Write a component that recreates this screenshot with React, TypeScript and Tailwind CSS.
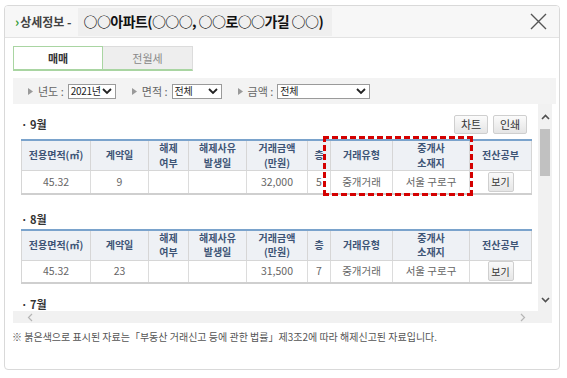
import React from "react";

const FONT = { fontFamily: '"Noto Sans CJK KR", "Noto Sans", sans-serif' };

const cols = [69, 58, 40, 58, 61, 23, 62, 77, 62];

function Tri() {
  return (
    <svg width="5" height="7" viewBox="0 0 5 7" className="mr-[5px]">
      <path d="M0 0 L5 3.5 L0 7 Z" fill="#9a9a9a" />
    </svg>
  );
}

function Chevron() {
  return (
    <svg width="10" height="7" viewBox="0 0 10 7" className="shrink-0">
      <path d="M1 1 L5 5 L9 1" fill="none" stroke="#222" strokeWidth="1.8" />
    </svg>
  );
}

function Select({ value, w }: { value: string; w: string }) {
  return (
    <div
      className={`${w} h-[15px] border border-[#9a9a9a] bg-white flex items-center justify-between pl-[2px] pr-[3px] text-[10px] tracking-[-0.3px] text-[#222] leading-none whitespace-nowrap`}
    >
      <span>{value}</span>
      <Chevron />
    </div>
  );
}

function Table({ day, floor, price }: { day: string; floor: string; price: string }) {
  const th = "border-r border-[#d6d6d6] last:border-r-0 text-[10px] font-bold text-[#3d5475] leading-[14.5px] text-center align-middle whitespace-nowrap";
  const td = "border-r border-[#dcdcdc] last:border-r-0 text-[10.5px] text-[#666] text-center align-middle whitespace-nowrap";
  return (
    <table className="table-fixed border-collapse w-[510px] border-t-2 border-t-[#7aa3cc] border-b-2 border-b-[#cfcfcf] border-l border-l-[#d6d6d6] border-r border-r-[#d6d6d6]">
      <colgroup>
        {cols.map((c, i) => (
          <col key={i} style={{ width: c }} />
        ))}
      </colgroup>
      <thead>
        <tr className="h-[29px] bg-[#eef1f5] border-b border-[#d6d6d6]">
          <th className={th}>전용면적(㎡)</th>
          <th className={th}>계약일</th>
          <th className={th}>해제<br />여부</th>
          <th className={th}>해제사유<br />발생일</th>
          <th className={th}>거래금액<br />(만원)</th>
          <th className={th}>층</th>
          <th className={th}>거래유형</th>
          <th className={th}>중개사<br />소재지</th>
          <th className={th}>전산공부</th>
        </tr>
      </thead>
      <tbody>
        <tr className="h-[23px] bg-white">
          <td className={td}>45.32</td>
          <td className={td}>{day}</td>
          <td className={td}></td>
          <td className={td}></td>
          <td className={td}>{price}</td>
          <td className={td}>{floor}</td>
          <td className={td}>중개거래</td>
          <td className={td}>서울 구로구</td>
          <td className={td}>
            <div className="mx-auto w-[26px] h-[20px] border border-[#cfcfcf] rounded-[2px] bg-gradient-to-b from-[#fafafa] to-[#e6e6e6] text-[10px] text-[#333] flex items-center justify-center">
              보기
            </div>
          </td>
        </tr>
      </tbody>
    </table>
  );
}

function Btn({ label }: { label: string }) {
  return (
    <div className="w-[34px] h-[19px] border border-[#cfcfcf] rounded-[2px] bg-gradient-to-b from-[#fbfbfb] to-[#e5e5e5] text-[11px] text-[#333] flex items-center justify-center">
      {label}
    </div>
  );
}

export default function App() {
  return (
    <div className="w-[567px] h-[378px] bg-white pt-[5px] pl-[4px]" style={FONT}>
      <div className="w-[556px] h-[365px] border border-[#d9d9d9] rounded-[4px] flex flex-col overflow-hidden">
        {/* header */}
        <div className="h-[32px] shrink-0 bg-[#f7f7f7] border-b border-[#e3e3e3] flex items-center pl-[10px] pr-[10px] whitespace-nowrap">
          <span className="text-[#2e9a2e] text-[13px] font-bold leading-none mr-[1px]">›</span>
          <span className="text-[12px] text-[#444] font-bold">상세정보 -</span>
          <div className="ml-[6px] h-[28px] w-[254px] bg-[#efefef] flex items-center pl-[6px] overflow-hidden">
            <span className="text-[14px] font-bold text-[#111] tracking-[-0.6px] whitespace-nowrap">○○아파트(○○○, ○○로○○가길 ○○)</span>
          </div>
          <div className="ml-auto mr-[2px]">
            <svg width="17" height="17" viewBox="0 0 17 17">
              <path d="M1 1 L16 16 M16 1 L1 16" stroke="#555" strokeWidth="1.4" />
            </svg>
          </div>
        </div>

        {/* body */}
        <div className="pl-[8px] pr-[3px] pt-[8px] flex flex-col">
          {/* tabs */}
          <div className="flex h-[25px]">
            <div className="w-[90px] h-full border border-[#a9d5a2] border-b-2 bg-white flex items-center justify-center text-[11px] font-bold text-[#333]">
              매매
            </div>
            <div className="w-[90px] h-full border border-[#dcdcdc] border-l-0 border-b-2 border-b-[#a9d5a2] bg-[#eeeeee] flex items-center justify-center text-[11px] text-[#888]">
              전월세
            </div>
          </div>

          {/* filter bar */}
          <div className="mt-[7px] h-[26px] bg-[#f3f3f3] flex items-center pl-[15px] text-[11px] text-[#666] whitespace-nowrap">
            <Tri />
            <span className="mr-[4px]">년도 :</span>
            <Select value="2021년" w="w-[48px]" />
            <div className="w-[16px]" />
            <Tri />
            <span className="mr-[4px]">면적 :</span>
            <Select value="전체" w="w-[50px]" />
            <div className="w-[16px]" />
            <Tri />
            <span className="mr-[4px]">금액 :</span>
            <Select value="전체" w="w-[93px]" />
          </div>

          {/* scroll region */}
          <div className="flex h-[219px] w-[539px]">
            <div className="flex flex-col w-[525px]">
              <div className="relative h-[207px] overflow-hidden pl-[8px]">
                {/* section 9 */}
                <div className="pt-[11px] w-[510px]">
                  <div className="h-[19px] flex items-center justify-between">
                    <span className="text-[11px] font-bold text-[#333]">· 9월</span>
                    <div className="flex gap-[5px] mr-[4px]">
                      <Btn label="차트" />
                      <Btn label="인쇄" />
                    </div>
                  </div>
                  <div className="mt-[5px]">
                    <Table day="9" floor="5" price="32,000" />
                  </div>
                </div>
                {/* section 8 */}
                <div className="mt-[16px]">
                  <div className="h-[18px] flex items-center text-[11px] font-bold text-[#333]">· 8월</div>
                  <Table day="23" floor="7" price="31,500" />
                </div>
                {/* section 7 */}
                <div className="mt-[12px]">
                  <div className="h-[16px] flex items-center text-[11px] leading-[15px] font-bold text-[#333]">· 7월</div>
                </div>
                {/* red dashed highlight */}
                <div className="absolute left-[310px] top-[32px] w-[150px] h-[60px] border-[3px] border-dashed border-[#d40000]" />
              </div>
              {/* horizontal scrollbar */}
              <div className="h-[12px] bg-[#f1f1f1] flex items-center justify-between pl-[14px] pr-[12px]">
                <svg width="6" height="9" viewBox="0 0 6 9">
                  <path d="M5 1 L1.5 4.5 L5 8" fill="none" stroke="#b5b5b5" strokeWidth="1.2" />
                </svg>
                <svg width="6" height="9" viewBox="0 0 6 9">
                  <path d="M1 1 L4.5 4.5 L1 8" fill="none" stroke="#b5b5b5" strokeWidth="1.2" />
                </svg>
              </div>
            </div>
            {/* vertical scrollbar */}
            <div className="w-[14px] bg-[#f1f1f1] flex flex-col items-center">
              <div className="h-[25px] flex items-center justify-center">
                <svg width="9" height="6" viewBox="0 0 9 6">
                  <path d="M1 5 L4.5 1.5 L8 5" fill="none" stroke="#505050" strokeWidth="1.6" />
                </svg>
              </div>
              <div className="w-[10px] h-[47px] bg-[#c1c1c1]" />
              <div className="flex-1" />
              <div className="h-[28px] flex items-start justify-center pt-[2px]">
                <svg width="9" height="6" viewBox="0 0 9 6">
                  <path d="M1 1 L4.5 4.5 L8 1" fill="none" stroke="#505050" strokeWidth="1.6" />
                </svg>
              </div>
            </div>
          </div>

          {/* note */}
          <div className="mt-[9px] text-[10px] text-[#555] leading-none -ml-[1px] whitespace-nowrap">
            ※ 붉은색으로 표시된 자료는「부동산 거래신고 등에 관한 법률」제3조2에 따라 해제신고된 자료입니다.
          </div>
        </div>
      </div>
    </div>
  );
}
